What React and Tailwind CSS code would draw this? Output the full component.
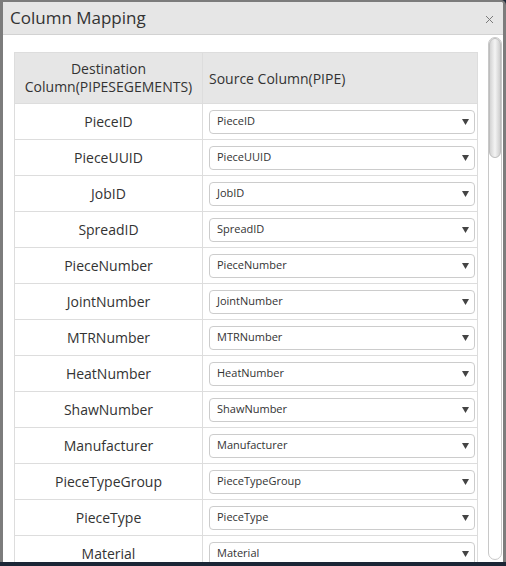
import React from "react";

const rows = [
  "PieceID",
  "PieceUUID",
  "JobID",
  "SpreadID",
  "PieceNumber",
  "JointNumber",
  "MTRNumber",
  "HeatNumber",
  "ShawNumber",
  "Manufacturer",
  "PieceTypeGroup",
  "PieceType",
  "Material",
];

function FakeSelect({ value }) {
  return (
    <div className="flex items-center justify-between h-[24px] border border-[#cccccc] rounded-[4px] bg-white pl-[7px] pr-[5px] text-[11px] text-[#333]">
      <span>{value}</span>
      <svg width="7" height="6" viewBox="0 0 7 6">
        <path d="M0 0 L7 0 L3.5 6 Z" fill="#444" />
      </svg>
    </div>
  );
}

export default function App() {
  return (
    <div
      className="w-[506px] h-[566px] bg-[#1b2636] overflow-hidden"
      style={{ fontFamily: '"Open Sans", "Noto Sans", sans-serif' }}
    >
      <div className="h-[562px] bg-white border-[#7c7c7c] border-l-[3px] border-r-[3px] border-t-2 rounded-tr-[5px] flex flex-col overflow-hidden">
        {/* header */}
        <div className="h-[33px] shrink-0 bg-[#e6e6e6] border-b border-[#d2d2d2] flex items-center justify-between pl-[7px] pr-[9px]">
          <span className="text-[17px] text-[#333]">Column Mapping</span>
          <svg width="9" height="9" viewBox="0 0 9 9" className="mt-[2px]">
            <path d="M1 1 L8 8 M8 1 L1 8" stroke="#7a7a7a" strokeWidth="1" />
          </svg>
        </div>

        {/* body */}
        <div className="flex-1 flex overflow-hidden">
          <div className="flex-1 pl-[11px] pr-[10px] pt-[17px] overflow-hidden">
            <table className="w-full border-collapse border border-[#dddddd] text-[14px] text-[#333]">
              <thead>
                <tr className="bg-[#e6e6e6] h-[51px]">
                  <th className="w-[188px] border border-[#dddddd] font-normal text-center leading-[18px] px-1">
                    Destination Column(PIPESEGEMENTS)
                  </th>
                  <th className="border border-[#dddddd] font-normal text-left pl-[6px]">
                    Source Column(PIPE)
                  </th>
                </tr>
              </thead>
              <tbody>
                {rows.map((r) => (
                  <tr key={r} className="h-[36px]">
                    <td className="border border-[#dddddd] text-center">{r}</td>
                    <td className="border border-[#dddddd] pl-[6px] pr-[2px]">
                      <FakeSelect value={r} />
                    </td>
                  </tr>
                ))}
              </tbody>
            </table>
          </div>

          {/* scrollbar */}
          <div className="w-[14px] shrink-0 mr-[1px] mt-[2px] mb-[2px] border border-[#c8c8c8] rounded-full bg-white flex flex-col">
            <div className="h-[120px] rounded-full bg-gradient-to-r from-[#d4d4d4] via-[#f4f4f4] to-[#cfcfcf] border border-[#bdbdbd]" />
          </div>
        </div>
      </div>
    </div>
  );
}
